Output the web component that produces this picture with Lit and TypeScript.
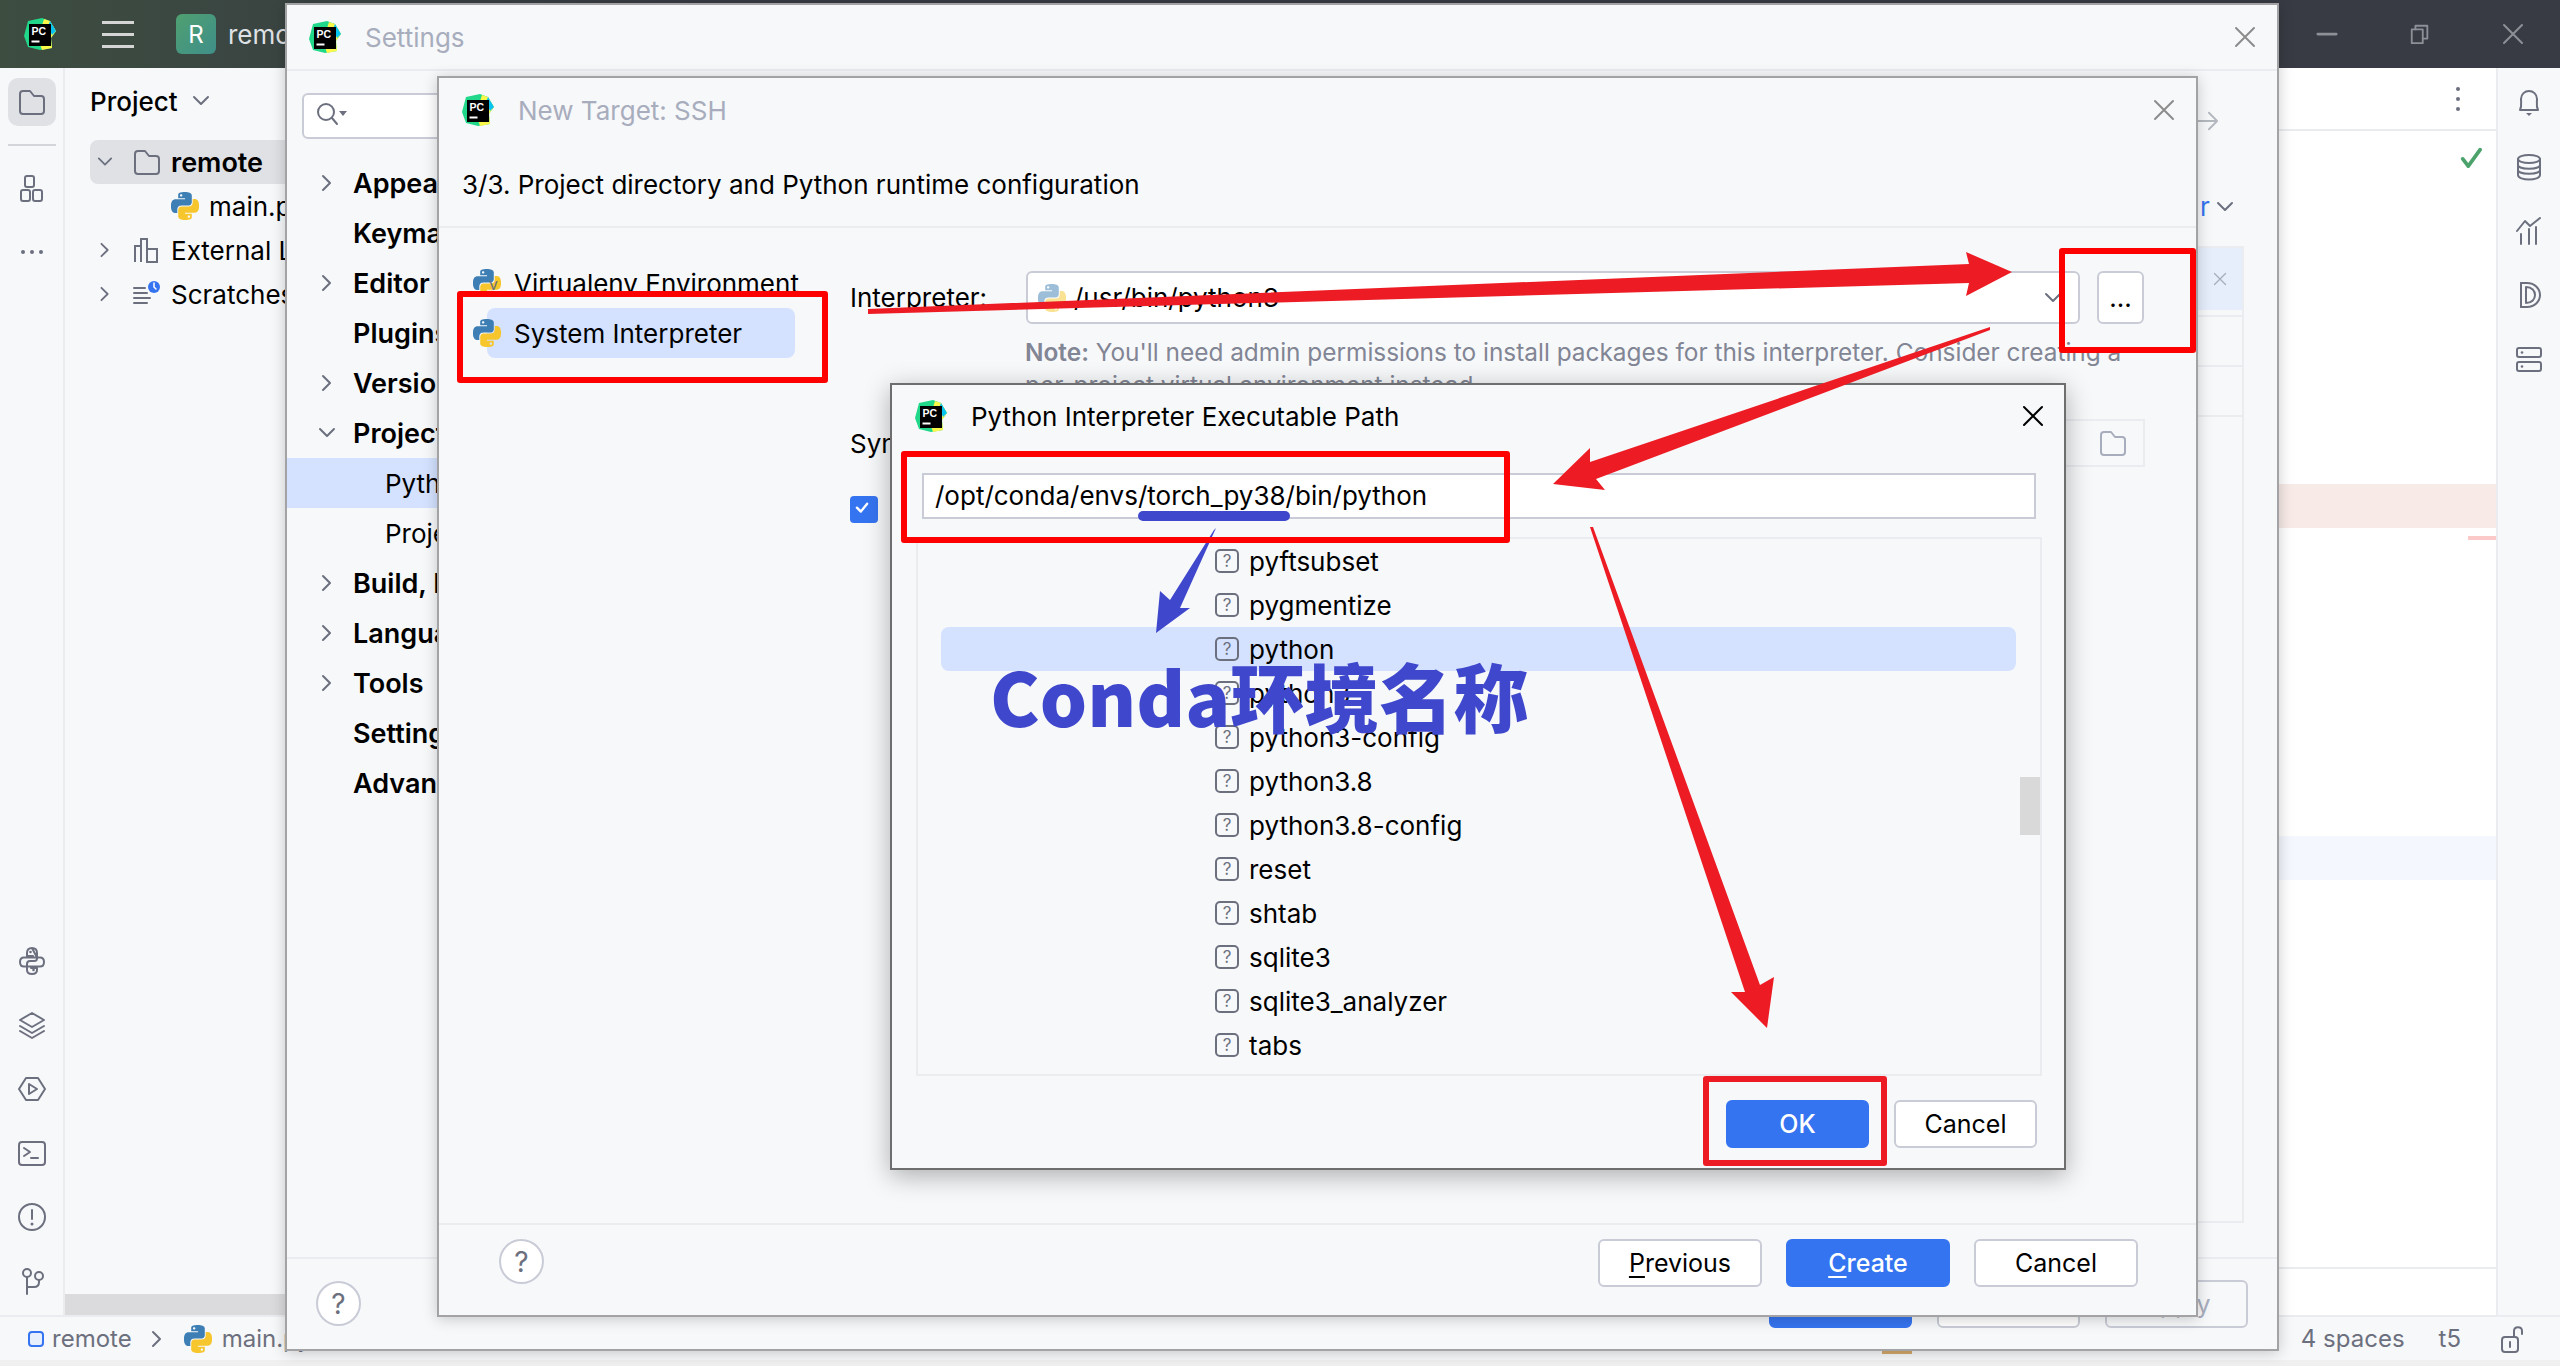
import { LitElement, html, css, svg } from "lit";
import { customElement } from "lit/decorators.js";

const PY_A = "M14.25.18l.9.2.73.26.59.3.45.32.34.34.25.34.16.33.1.3.04.26.02.2-.01.13V8.5l-.05.63-.13.55-.21.46-.26.38-.3.31-.33.25-.35.19-.35.14-.33.1-.3.07-.26.04-.21.02H8.77l-.69.05-.59.14-.5.22-.41.27-.33.32-.27.35-.2.36-.15.37-.1.35-.07.32-.04.27-.02.21v3.06H3.17l-.21-.03-.28-.07-.32-.12-.35-.18-.36-.26-.36-.36-.35-.46-.32-.59-.28-.73-.21-.88-.14-1.05-.05-1.23.06-1.22.16-1.04.24-.87.32-.71.36-.57.4-.44.42-.33.42-.24.4-.16.36-.1.32-.05.24-.01h.16l.06.01h8.16v-.83H6.18l-.01-2.75-.02-.37.05-.34.11-.31.17-.28.25-.26.31-.23.38-.2.44-.18.51-.15.58-.12.64-.1.71-.06.77-.04.84-.02 1.27.05zM7.95 2.16l-.23.33-.08.41.08.41.23.34.33.22.41.09.41-.09.33-.22.23-.34.08-.41-.08-.41-.23-.33-.33-.22-.41-.09-.41.09z";
const PY_B = "M21.04 6.11l.28.06.32.12.35.18.36.27.36.35.35.47.32.59.28.73.21.88.14 1.04.05 1.23-.06 1.23-.16 1.04-.24.86-.32.71-.36.57-.4.45-.42.33-.42.24-.4.16-.36.09-.32.05-.24.02-.16-.01h-8.22v.82h5.84l.01 2.76.02.36-.05.34-.11.31-.17.29-.25.25-.31.24-.38.2-.44.17-.51.15-.58.13-.64.09-.71.07-.77.04-.84.01-1.27-.04-1.07-.14-.9-.2-.73-.25-.59-.3-.45-.33-.34-.34-.25-.34-.16-.33-.1-.3-.04-.25-.02-.2.01-.13v-5.34l.05-.64.13-.54.21-.46.26-.38.3-.32.33-.24.35-.2.35-.14.33-.1.3-.06.26-.04.21-.02.13-.01h5.84l.69-.05.59-.14.5-.21.41-.28.33-.32.27-.35.2-.36.15-.36.1-.35.07-.32.04-.28.02-.21V6.07h2.09l.14.01zM14.57 20.36l-.23.33-.08.41.08.41.23.33.33.23.41.08.41-.08.33-.23.23-.33.08-.41-.08-.41-.23-.33-.33-.23-.41-.08-.41.08z";

const py = (cls = "ic28") => html`<svg class=${cls} viewBox="0 0 24 24"><path fill="#3d7fb5" fill-rule="evenodd" d=${PY_A}/><path fill="#f6c62c" fill-rule="evenodd" d=${PY_B}/></svg>`;

const logo = () => html`<svg class="logo" viewBox="0 0 32 32">
  <path d="M4 3 L18 0 L26 3 L32 13 L27 20 L28 30 L16 32 L4 29 L0 18 Z" fill="#21d789"/>
  <path d="M20 1 L26 3 L32 13 L27 20 L28 30 L18 32 L14 20 Z" fill="#fcf84a"/>
  <path d="M26 3 L32 13 L28 17 L24 8 Z" fill="#07c3f2"/>
  <rect x="5" y="6" width="22" height="22" fill="#000"/>
  <text x="7.5" y="17" class="logo-t">PC</text>
  <rect x="7.5" y="22.5" width="8" height="2" fill="#fff"/>
</svg>`;

const ln = (d: string, c = "#6c707e", w = 2) => svg`<path d=${d} fill="none" stroke=${c} stroke-width=${w} stroke-linecap="round" stroke-linejoin="round"/>`;
const ic = (body: unknown, cls = "ic28", vb = "0 0 28 28") => html`<svg class=${cls} viewBox=${vb}>${body}</svg>`;

const folder = (c = "#6c707e") => ic(ln("M2 6 a3 3 0 0 1 3-3 h7 l4 5 h7 a3 3 0 0 1 3 3 v12 a3 3 0 0 1-3 3 H5 a3 3 0 0 1-3-3 Z", c));
const chevR = () => ic(ln("M5 2 L12 9 L5 16", "#6c707e"), "ic18", "0 0 18 18");
const chevD = () => ic(ln("M2 5 L9 12 L16 5", "#6c707e"), "ic18", "0 0 18 18");
const xIcon = (c = "#8c8c8c") => ic(ln("M2 2 L20 20 M20 2 L2 20", c), "ic22", "0 0 22 22");

const treeItems = ["pyftsubset", "pygmentize", "python", "python3", "python3-config", "python3.8", "python3.8-config", "reset", "shtab", "sqlite3", "sqlite3_analyzer", "tabs"];
const settingsItems: [string, string][] = [["r", "Appearance"], ["", "Keymap"], ["r", "Editor"], ["", "Plugins"], ["r", "Version Control"], ["d", "Project: remote"], ["s", "Python Interpreter"], ["s2", "Project Structure"], ["r", "Build, Execution"], ["r", "Languages"], ["r", "Tools"], ["", "Settings Sync"], ["", "Advanced"]];

@customElement("app-root")
export class AppRoot extends LitElement {
  static styles = css`
    :host { display: block; position: relative; width: 2560px; height: 1366px; overflow: hidden; background: #f7f8fa; font-family: Inter, "Noto Sans", sans-serif; font-size: 26px; color: #000; }
    svg { display: block; flex: none; }
    .ic28 { width: 28px; height: 28px; }
    .ic18 { width: 18px; height: 18px; }
    .ic22 { width: 22px; height: 22px; }
    .ic-s { width: 32px; height: 28px; }
    .logo { width: 32px; height: 32px; }
    .logo-t { font: 700 10.5px "Liberation Sans", sans-serif; fill: #fff; }

    .app { display: flex; flex-direction: column; height: 1366px; }
    .title { height: 68px; flex: none; display: flex; align-items: center; padding: 0 36px 0 24px; background: linear-gradient(90deg, #3d4d40 0, #3a4442 300px, #383b43 700px); color: #dfe1e5; }
    .burger { margin-left: 46px; display: flex; flex-direction: column; gap: 9px; width: 32px; }
    .burger i { display: block; height: 3px; background: #d5d5d5; }
    .rbadge { margin-left: 42px; width: 40px; height: 40px; border-radius: 6px; background: linear-gradient(135deg, #4fa070, #3f8f8a); display: flex; align-items: center; justify-content: center; font-size: 24px; color: #fff; }
    .rname { margin-left: 12px; }
    .winctl { margin-left: auto; display: flex; align-items: center; gap: 71px; }
    .main { flex: 1; display: flex; min-height: 0; }
    .lstrip { width: 65px; flex: none; border-right: 2px solid #ebecf0; box-sizing: border-box; display: flex; flex-direction: column; align-items: center; padding: 10px 0 20px; }
    .act { width: 48px; height: 48px; border-radius: 10px; background: #dfe1e5; display: flex; align-items: center; justify-content: center; }
    .sep { width: 48px; height: 2px; background: #d3d5db; margin: 18px 0 29px; flex: none; }
    .dots { margin-top: 35px; }
    .lower { margin-top: auto; display: flex; flex-direction: column; gap: 36px; }
    .proj { width: 220px; flex: none; padding-left: 25px; box-sizing: border-box; display: flex; flex-direction: column; position: relative; }
    .proj-h { height: 66px; display: flex; align-items: center; gap: 14px; font-weight: 500; }
    .prow { height: 44px; display: flex; align-items: center; white-space: nowrap; padding-left: 7px; }
    .prow.sel { background: #dfe1e5; border-radius: 8px 0 0 8px; margin-top: 6px; }
    .prow.sel span { font-weight: 600; font-size: 27px; }
    .prow .ic18 { margin-right: 20px; width: 16px; }
    .prow .ic28 { margin-right: 10px; }
    .prow.leaf { padding-left: 81px; }
    .hscroll { position: absolute; left: 0; right: 0; bottom: 0; height: 21px; background: #dbdbdd; }
    .editor { flex: 1; background: #fff; display: flex; flex-direction: column; min-width: 0; }
    .ed-tool { height: 63px; flex: none; border-bottom: 2px solid #ebecf0; box-sizing: border-box; display: flex; align-items: center; justify-content: flex-end; padding-right: 24px; }
    .ed-check { display: flex; justify-content: flex-end; padding: 15px 14px 0 0; height: 353px; box-sizing: border-box; flex: none; }
    .ed-pink { height: 44px; background: #f7eae7; flex: none; }
    .ed-dash { height: 4px; margin: 8px 0 0 auto; width: 28px; background: #fcc9c9; flex: none; }
    .ed-blue { height: 44px; background: #f4f7fe; margin-top: 296px; flex: none; }
    .ed-gap { flex: 1; }
    .ed-foot { height: 48px; border-top: 2px solid #ebecf0; box-sizing: border-box; flex: none; }
    .rstrip { width: 64px; flex: none; border-left: 2px solid #ebecf0; box-sizing: border-box; display: flex; flex-direction: column; align-items: center; gap: 36px; padding-top: 21px; background: #f7f8fa; }
    .status { height: 45px; flex: none; border-top: 2px solid #ebecf0; box-sizing: border-box; display: flex; align-items: center; padding: 0 33px 0 28px; color: #6c707e; background: #f7f8fa; font-size: 24px; }
    .sq { width: 16px; height: 16px; box-sizing: border-box; border: 2px solid #3574f0; background: #e7effd; border-radius: 4px; margin-right: 8px; }
    .st-chev { margin: 0 18px 0 16px; }
    .st-main { margin-left: 10px; }
    .st-r { margin-left: auto; display: flex; align-items: center; }
    .st-t5 { margin-left: 34px; }
    .st-lock { margin-left: 38px; }
    .band { height: 6px; flex: none; background: #f0f0f0; }

    .win { position: absolute; box-sizing: border-box; background: #f7f8fa; border: 2px solid #a3a3a5; box-shadow: 0 2px 14px rgba(0,0,0,.2); display: flex; flex-direction: column; }
    .settings { left: 285px; top: 3px; width: 1994px; height: 1348px; }
    .new { left: 437px; top: 76px; width: 1761px; height: 1241px; }
    .dlg { left: 890px; top: 383px; width: 1176px; height: 787px; border-color: #6e6e6e; box-shadow: 0 6px 24px rgba(0,0,0,.3); }

    .hdr { display: flex; align-items: center; flex: none; }
    .hdr .x { margin-left: auto; }
    .s-hdr { height: 66px; padding: 0 21px 0 22px; border-bottom: 2px solid #ebecf0; box-sizing: border-box; }
    .w-title { color: #a8adbd; margin-left: 24px; }
    .s-body { flex: 1; display: flex; min-height: 0; }
    .s-side { width: 150px; flex: none; overflow: hidden; display: flex; flex-direction: column; }
    .search { margin: 22px 0 0 15px; width: 200px; height: 46px; flex: none; box-sizing: border-box; border: 2px solid #c9ccd6; background: #fff; border-radius: 6px; display: flex; align-items: center; padding-left: 12px; }
    .s-tree { margin-top: 19px; display: flex; flex-direction: column; }
    .s-row { height: 50px; flex: none; display: flex; align-items: center; white-space: nowrap; font-weight: 600; font-size: 27px; padding-left: 66px; position: relative; }
    .s-row .ic18 { position: absolute; left: 31px; }
    .s-row.s, .s-row.s2 { font-weight: 400; font-size: 26px; padding-left: 98px; }
    .s-row.s { background: #d4e2ff; }
    .s-right { flex: 1; position: relative; min-width: 0; }
    .s-arrow { position: absolute; right: 58px; top: 39px; }
    .s-rr { position: absolute; left: 1763px; top: 120px; width: 64px; display: flex; gap: 6px; align-items: center; color: #3574f0; white-space: nowrap; }
    .s-list { position: absolute; right: 33px; top: 175px; width: 47px; height: 977px; box-sizing: border-box; border: 2px solid #ebecf0; border-left: none; display: flex; flex-direction: column; }
    .s-sel { height: 62px; background: #e6eefc; display: flex; align-items: center; justify-content: center; flex: none; }
    .s-cell { height: 50px; border-bottom: 2px solid #ebecf0; box-sizing: border-box; flex: none; }
    .s-cell.first { margin-top: 5px; border-top: 2px solid #ebecf0; height: 52px; }
    .s-foot { position: absolute; left: 0; right: 0; top: 1252px; border-top: 2px solid #ebecf0; height: 92px; }
    .s-foot-in { position: absolute; top: 21px; left: 1482px; display: flex; gap: 25px; }
    .help { position: absolute; width: 45px; height: 45px; box-sizing: border-box; border: 2px solid #c9ccd6; border-radius: 50%; background: #fff; display: flex; align-items: center; justify-content: center; color: #6c707e; font-size: 28px; }
    .help-s { left: 29px; top: 22px; }
    .help-n { left: 60px; top: 14px; }

    .btn { width: 143px; height: 48px; box-sizing: border-box; border: 2px solid #c9ccd6; border-radius: 6px; background: #fff; display: flex; align-items: center; justify-content: center; font-size: 25px; }
    .btn.blue { background: #3574f0; border-color: #3574f0; color: #fff; font-weight: 500; }
    .btn.ghost { background: transparent; color: #a8adbd; }
    .btn.wide { width: 164px; }
    .btn u { text-decoration-thickness: 2px; text-underline-offset: 4px; }
    .foot-row { display: flex; gap: 24px; }

    .n-hdr { height: 64px; padding: 0 21px 0 23px; }
    .n-sub { height: 84px; flex: none; display: flex; align-items: center; padding: 0 0 0 23px; border-bottom: 2px solid #ebecf0; }
    .n-body { flex: 1; display: flex; min-height: 0; }
    .n-left { width: 411px; flex: none; padding: 30px 0 0 34px; box-sizing: border-box; display: flex; flex-direction: column; }
    .n-opt { height: 50px; display: flex; align-items: center; gap: 13px; position: relative; white-space: nowrap; }
    .n-opt.sel::before { content: ""; position: absolute; left: 14px; width: 308px; top: 0; bottom: 0; background: #d4e2ff; border-radius: 8px; }
    .n-opt > * { position: relative; }
    .vmark { position: absolute; left: 16px; top: 16px; font-size: 16px; color: #6c707e; }
    .n-right { flex: 1; padding: 43px 0 0 0; min-width: 0; position: relative; }
    .n-row { display: flex; align-items: center; gap: 17px; height: 53px; }
    .lbl { width: 159px; flex: none; white-space: nowrap; }
    .combo { width: 1054px; height: 53px; box-sizing: border-box; border: 2px solid #c9ccd6; border-radius: 6px; background: #fff; display: flex; align-items: center; padding: 0 16px 0 10px; gap: 8px; flex: none; }
    .combo .fade { opacity: .5; }
    .combo .ic18 { margin-left: auto; }
    .dotsbtn { width: 47px; height: 53px; box-sizing: border-box; border: 2px solid #c9ccd6; border-radius: 6px; background: #fff; display: flex; align-items: center; justify-content: center; flex: none; }
    .note { margin: 12px 0 0 175px; width: 1120px; color: #818594; line-height: 33px; white-space: nowrap; font-size: 24.4px; }
    .note b { font-weight: 600; }
    .n-row2 { margin-top: 17px; height: 48px; width: 1295px; display: flex; align-items: center; }
    .pathbox { margin-left: auto; width: 200px; height: 48px; box-sizing: border-box; border: 2px solid #ebecf0; display: flex; align-items: center; justify-content: flex-end; padding-right: 16px; flex: none; }
    .check { margin-top: 29px; width: 28px; height: 27px; border-radius: 4px; background: #3574f0; display: flex; align-items: center; justify-content: center; }
    .n-foot { height: 90px; flex: none; border-top: 2px solid #ebecf0; position: relative; }
    .n-foot .foot-row { position: absolute; top: 14px; left: 1159px; }

    .d-hdr { height: 62px; padding: 0 20px 0 23px; flex: none; }
    .d-hdr .w-title { color: #000; margin-left: 24px; }
    .d-in { margin: 26px 0 0 30px; width: 1114px; height: 46px; box-sizing: border-box; border: 2px solid #c9ccd6; background: #fff; display: flex; align-items: center; padding: 0 0 2px 11px; flex: none; }
    .tree { margin: 18px 0 0 24px; width: 1126px; height: 539px; box-sizing: border-box; border: 2px solid #ebecf0; position: relative; overflow: hidden; flex: none; display: flex; flex-direction: column; }
    .t-row { height: 44px; flex: none; display: flex; align-items: center; gap: 10px; padding-left: 297px; position: relative; }
    .t-row.sel::before { content: ""; position: absolute; left: 23px; width: 1075px; top: 0; bottom: 0; background: #d4e2ff; border-radius: 8px; }
    .t-row > * { position: relative; }
    .q { width: 24px; height: 24px; box-sizing: border-box; border: 2px solid #6c707e; border-radius: 5px; display: flex; align-items: center; justify-content: center; font-size: 17px; color: #6c707e; }
    .tscroll { position: absolute; right: 0; top: 238px; width: 20px; height: 58px; background: #d9d9d9; }
    .d-foot { display: flex; gap: 25px; justify-content: flex-end; padding: 24px 27px 0 0; }

    .over { position: absolute; inset: 0; pointer-events: none; }
    .over svg { position: absolute; left: 0; top: 0; width: 2560px; height: 1366px; }
    .box { position: absolute; box-sizing: border-box; border: 6px solid #fe0000; border-radius: 3px; }
    .b1 { left: 457px; top: 291px; width: 371px; height: 92px; }
    .b2 { left: 2059px; top: 248px; width: 137px; height: 105px; }
    .b3 { left: 901px; top: 451px; width: 609px; height: 92px; }
    .b4 { left: 1703px; top: 1076px; width: 184px; height: 90px; border-color: #ed1c24; }
    .under { position: absolute; left: 1138px; top: 511px; width: 152px; height: 10px; border-radius: 5px; background: #3f48cc; }
    .conda { position: absolute; left: 990px; top: 640px; font: 900 74.5px "Noto Sans CJK SC", sans-serif; color: #3f48cc; white-space: nowrap; line-height: 110px; }
    .peek { position: absolute; left: 1882px; top: 1351px; width: 30px; height: 3px; background: #d4a96a; }
  `;

  render() {
    const q = html`<span class="q">?</span>`;
    return html`
      <div class="app">
        <div class="title">
          ${logo()}
          <div class="burger"><i></i><i></i><i></i></div>
          <div class="rbadge">R</div>
          <span class="rname">remote</span>
          <div class="winctl">
            ${ic(ln("M2 11 H22", "#8d9097", 3), "ic22", "0 0 24 22")}
            ${ic(svg`${ln("M3 7 H15 V22 H3 Z", "#8d9097")}${ln("M7 7 V3 H20 V17 H15", "#8d9097")}`, "ic22", "0 0 24 24")}
            ${xIcon("#8d9097")}
          </div>
        </div>
        <div class="main">
          <div class="lstrip">
            <div class="act">${folder()}</div>
            <div class="sep"></div>
            ${ic(svg`<rect x="7" y="1" width="9" height="11" rx="2" fill="none" stroke="#6c707e" stroke-width="2"/><rect x="3" y="15" width="9" height="11" rx="2" fill="none" stroke="#6c707e" stroke-width="2"/><rect x="15" y="15" width="9" height="11" rx="2" fill="none" stroke="#6c707e" stroke-width="2"/>`)}
            ${ic(svg`<circle cx="5" cy="14" r="2" fill="#6c707e"/><circle cx="14" cy="14" r="2" fill="#6c707e"/><circle cx="23" cy="14" r="2" fill="#6c707e"/>`, "ic28 dots")}
            <div class="lower">
              ${ic(svg`${ln("M14 1 C10 1 9 3 9 6 V9 H15 M19 10.5 H6 C3.5 10.5 2 12 2 15 C2 18 3.5 19.5 6 19.5 H9 V17 C9 15 10.5 14 12 14 H16 C18 14 19 13 19 11.5 V6 C19 3 18 1 14 1 Z")}${ln("M19 10.5 H22 C24.5 10.5 26 12 26 15 C26 18 24.5 19.5 22 19.5 H9 M13 21 H19 V23 C19 26 17.5 27 14 27 C10.5 27 9 26 9 23 V19.5")}<circle cx="12.5" cy="5" r="1.3" fill="#6c707e"/><circle cx="15.5" cy="23" r="1.3" fill="#6c707e"/>`)}
              ${ic(svg`${ln("M14 2 L26 9 L14 16 L2 9 Z")}${ln("M2 15 L14 22 L26 15")}${ln("M2 20 L14 27 L26 20")}`)}
              ${ic(svg`${ln("M8 3 H20 L27 14 L20 25 H8 L1 14 Z")}${ln("M11 9 L19 14 L11 19 Z")}`)}
              ${ic(svg`<rect x="1" y="3" width="26" height="23" rx="3" fill="none" stroke="#6c707e" stroke-width="2"/>${ln("M6 9 L12 13 L6 17")}${ln("M13 19 H20")}`)}
              ${ic(svg`<circle cx="14" cy="14" r="13" fill="none" stroke="#6c707e" stroke-width="2"/>${ln("M14 7 V16")}<circle cx="14" cy="21" r="1.5" fill="#6c707e"/>`)}
              ${ic(svg`<circle cx="9" cy="6" r="4" fill="none" stroke="#6c707e" stroke-width="2"/><circle cx="21" cy="9" r="4" fill="none" stroke="#6c707e" stroke-width="2"/>${ln("M9 10 V27")}${ln("M21 13 V15 Q21 20 16 20 H9")}`)}
            </div>
          </div>
          <div class="proj">
            <div class="proj-h">Project ${ic(ln("M2 5 L9 12 L16 5", "#6c707e"), "ic18", "0 0 18 18")}</div>
            <div class="prow sel">${chevD()}${folder()}<span>remote</span></div>
            <div class="prow leaf">${py()}<span>main.py</span></div>
            <div class="prow">${chevR()}${ic(svg`<path d="M2 26 V10 H8 V26 M8 26 V3 H14 V26 M14 26 V13 H24 V26 Z" fill="none" stroke="#6c707e" stroke-width="2"/>`)}<span>External Libraries</span></div>
            <div class="prow">${chevR()}${ic(svg`${ln("M1 13 H14 M1 18 H17 M1 23 H14 M1 8 H12", "#6c707e")}<circle cx="21" cy="7" r="6" fill="#3574f0"/>${ln("M21 3 V7 L23 9", "#fff", 1.5)}`)}<span>Scratches</span></div>
            <div class="hscroll"></div>
          </div>
          <div class="editor">
            <div class="ed-tool">${ic(svg`<circle cx="4" cy="4" r="2" fill="#6c707e"/><circle cx="4" cy="14" r="2" fill="#6c707e"/><circle cx="4" cy="24" r="2" fill="#6c707e"/>`, "ic28 kebab", "0 0 8 28")}</div>
            <div class="ed-check">${ic(ln("M3 14 L9 22 L22 4", "#4ba36b", 4), "ic22", "0 0 24 24")}</div>
            <div class="ed-pink"></div>
            <div class="ed-dash"></div>
            <div class="ed-blue"></div>
            <div class="ed-gap"></div>
            <div class="ed-foot"></div>
          </div>
          <div class="rstrip">
            ${ic(svg`${ln("M5 21 C7 17 6 13 6 10 C6 5 10 2 14 2 C18 2 22 5 22 10 C22 13 21 17 23 21 Z")}<path d="M11 24 H17 L14 27 Z" fill="#6c707e"/>`)}
            ${ic(svg`<ellipse cx="14" cy="6" rx="11" ry="4" fill="none" stroke="#6c707e" stroke-width="2"/>${ln("M3 6 V22 C3 28 25 28 25 22 V6 M3 12 C3 17 25 17 25 12 M3 17 C3 22 25 22 25 17")}`)}
            ${ic(svg`${ln("M2 14 L10 4 L15 9 L25 1")}${ln("M6 27 V17 M14 27 V12 M21 27 V10")}`)}
            ${ic(svg`${ln("M6 2 H12 C20 2 25 8 25 14 C25 20 20 26 12 26 H6 Z")}${ln("M11 6 C17 6 20 10 20 14 C20 18 17 22 11 22 V6 M6 2 H11 M6 26 H11")}`)}
            ${ic(svg`<rect x="2" y="3" width="24" height="9" rx="2" fill="none" stroke="#6c707e" stroke-width="2"/><rect x="2" y="17" width="24" height="9" rx="2" fill="none" stroke="#6c707e" stroke-width="2"/><circle cx="7" cy="7.5" r="1.3" fill="#6c707e"/><circle cx="7" cy="21.5" r="1.3" fill="#6c707e"/>`)}
          </div>
        </div>
        <div class="status">
          <i class="sq"></i><span>remote</span>
          <span class="st-chev">${chevR()}</span>
          ${py()}<span class="st-main">main.py</span>
          <div class="st-r"><span>4 spaces</span><span class="st-t5">t5</span>
          <span class="st-lock">${ic(svg`<rect x="3" y="12" width="16" height="15" rx="3" fill="none" stroke="#6c707e" stroke-width="2"/>${ln("M11 17 V22")}${ln("M15 12 V6 C15 1 23 1 23 6 V9")}`)}</span></div>
        </div>
        <div class="band"></div>
      </div>

      <div class="peek"></div>

      <div class="win settings">
        <div class="hdr s-hdr">${logo()}<span class="w-title">Settings</span><span class="x">${xIcon()}</span></div>
        <div class="s-body">
          <div class="s-side">
            <div class="search">${ic(svg`<circle cx="10" cy="10" r="8" fill="none" stroke="#6c707e" stroke-width="2"/>${ln("M16 16 L21 22")}<path d="M23 9 H31 L27 14 Z" fill="#6c707e"/>`, "ic-s", "0 0 32 28")}</div>
            <div class="s-tree">
              ${settingsItems.map(([k, t]) => html`<div class="s-row ${k}">${k === "r" ? chevR() : k === "d" ? chevD() : ""}<span>${t}</span></div>`)}
            </div>
          </div>
          <div class="s-right">
            <span class="s-arrow">${ic(ln("M1 12 H22 M13 3 L22 12 L13 21", "#b4b8bf"), "ic22", "0 0 24 24")}</span>
            <div class="s-rr"><span>r</span>${chevD()}</div>
            <div class="s-list">
              <div class="s-sel">${ic(ln("M8 3 L24 19 M24 3 L8 19", "#a8adbd"), "ic22", "0 0 32 22")}</div>
              <div class="s-cell first"></div><div class="s-cell"></div>
            </div>
          </div>
        </div>
        <div class="s-foot">
          <div class="help help-s">?</div>
          <div class="s-foot-in">
            <div class="btn blue">OK</div><div class="btn"></div><div class="btn ghost">Apply</div>
          </div>
        </div>
      </div>

      <div class="win new">
        <div class="hdr n-hdr">${logo()}<span class="w-title">New Target: SSH</span><span class="x">${xIcon()}</span></div>
        <div class="n-sub">3/3. Project directory and Python runtime configuration</div>
        <div class="n-body">
          <div class="n-left">
            <div class="n-opt">${py()}<span class="vmark">v</span><span>Virtualenv Environment</span></div>
            <div class="n-opt sel">${py()}<span>System Interpreter</span></div>
          </div>
          <div class="n-right">
            <div class="n-row"><span class="lbl">Interpreter:</span>
              <div class="combo"><span class="fade">${py()}</span><span>/usr/bin/python3</span>${chevD()}</div>
              <div class="dotsbtn">...</div>
            </div>
            <div class="note"><b>Note:</b> You'll need admin permissions to install packages for this interpreter. Consider creating a<br>per-project virtual environment instead.</div>
            <div class="n-row2"><span>Sync</span><div class="pathbox">${ic(ln("M2 6 a3 3 0 0 1 3-3 h7 l4 5 h7 a3 3 0 0 1 3 3 v12 a3 3 0 0 1-3 3 H5 a3 3 0 0 1-3-3 Z", "#a8adbd"))}</div></div>
            <div class="check">${ic(ln("M5 11 L10 16 L18 6", "#fff", 3), "ic22")}</div>
          </div>
        </div>
        <div class="n-foot">
          <div class="help help-n">?</div>
          <div class="foot-row">
            <div class="btn wide"><span><u>P</u>revious</span></div>
            <div class="btn wide blue"><span><u>C</u>reate</span></div>
            <div class="btn wide">Cancel</div>
          </div>
        </div>
      </div>

      <div class="win dlg">
        <div class="hdr d-hdr">${logo()}<span class="w-title">Python Interpreter Executable Path</span><span class="x">${xIcon("#000")}</span></div>
        <div class="d-in">/opt/conda/envs/torch_py38/bin/python</div>
        <div class="tree">
          ${treeItems.map((t) => html`<div class="t-row ${t === "python" ? "sel" : ""}">${q}<span>${t}</span></div>`)}
          <div class="tscroll"></div>
        </div>
        <div class="d-foot"><div class="btn blue">OK</div><div class="btn">Cancel</div></div>
      </div>

      <div class="over">
        <svg viewBox="0 0 2560 1366">
          <polygon fill="#ed1c24" points="868,309 868,314 1969,283 1966,296 2012,272 1966,252 1969,264" />
          <polygon fill="#ed1c24" points="1990,327 1590,462 1590,448 1553,484 1605,490 1596,479 1990,330" />
          <polygon fill="#ed1c24" points="1590,527 1593,527 1760,985 1774,977 1767,1028 1731,992 1745,992" />
          <polygon fill="#3f48cc" points="1216,528 1214,530 1170,600 1160,591 1156,633 1190,608 1180,608" />
        </svg>
        <div class="box b1"></div><div class="box b2"></div><div class="box b3"></div><div class="box b4"></div>
        <div class="under"></div>
        <div class="conda">Conda环境名称</div>
      </div>
    `;
  }
}
